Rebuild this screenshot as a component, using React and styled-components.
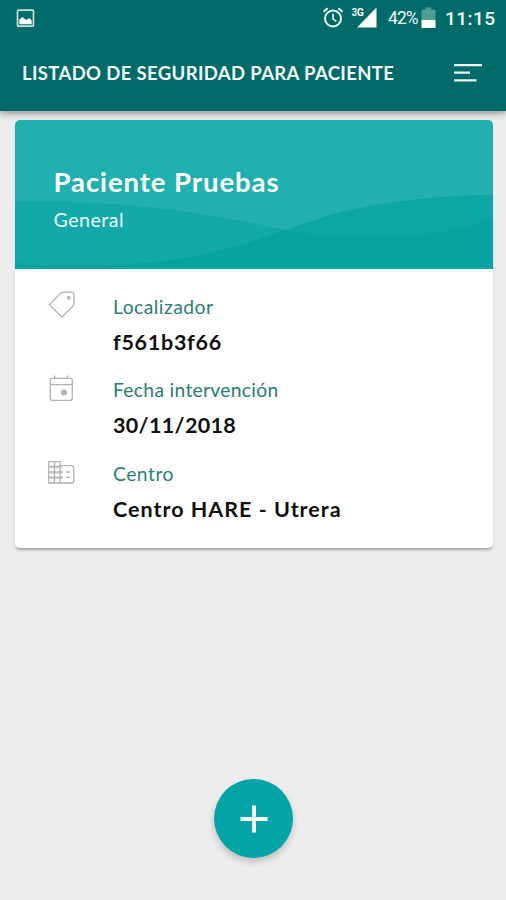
import React from "react";
import styled, { createGlobalStyle } from "styled-components";

const GlobalStyle = createGlobalStyle`
  * { box-sizing: border-box; }
  body { margin: 0; background: #ededed; font-family: Lato, "Open Sans", sans-serif; }
`;

const Screen = styled.div`
  display: flex;
  flex-direction: column;
  width: 506px;
  height: 900px;
  overflow: hidden;
  background: #ededed;
`;

const Header = styled.header`
  flex: none;
  height: 111px;
  background: #006b68;
  box-shadow: 0 2px 7px rgba(0, 0, 0, 0.42);
`;

const StatusBar = styled.div`
  display: flex;
  align-items: center;
  height: 36px;
  padding: 0 11px 0 16px;
  color: #f2f8f8;
  font-family: Roboto, sans-serif;
`;

const StatusIcon = styled.svg`
  display: block;
  flex: none;
  margin-left: ${(p) => p.$gap || 0}px;
`;

const Spacer = styled.div`
  flex: 1;
`;

const Battery = styled.span`
  width: 31px;
  margin-left: 10px;
  font-size: 17.5px;
  line-height: 36px;
  letter-spacing: -0.9px;
  white-space: nowrap;
`;

const Clock = styled.span`
  width: 50px;
  margin-left: 9px;
  font-size: 19.2px;
  font-weight: 500;
  line-height: 37px;
  letter-spacing: 0.35px;
  white-space: nowrap;
`;

const AppBar = styled.div`
  display: flex;
  align-items: center;
  justify-content: space-between;
  height: 73px;
  padding: 0 24px 0 22px;
`;

const AppTitle = styled.h1`
  margin: 0;
  color: #f4fafa;
  font-size: 18.5px;
  font-weight: 700;
  line-height: 24px;
  letter-spacing: ${(p) => p.$spacing}px;
  white-space: nowrap;
`;

const IconButton = styled.button`
  display: block;
  padding: 0;
  border: 0;
  background: none;
`;

const Main = styled.main`
  display: flex;
  flex: 1;
  flex-direction: column;
  align-items: center;
  justify-content: space-between;
  padding: 9px 13.5px 42px 14.5px;
`;

const Card = styled.article`
  width: 478px;
  height: 428px;
  overflow: hidden;
  border-radius: 5px;
  background: #fff;
  box-shadow: 0 3px 3px -1px rgba(0, 0, 0, 0.32);
`;

const CardHead = styled.div`
  display: grid;
  height: 149px;
  background: #21b0b0;
`;

const Waves = styled.svg`
  display: block;
  grid-area: 1 / 1;
`;

const HeadText = styled.div`
  grid-area: 1 / 1;
  z-index: 1;
  padding: 43px 39px 0;
  color: #fff;
`;

const PatientName = styled.h2`
  margin: 0;
  font-size: 27.5px;
  font-weight: 700;
  line-height: 38px;
  letter-spacing: ${(p) => p.$spacing}px;
  white-space: nowrap;
`;

const Category = styled.p`
  margin: 6px 0 0;
  color: #e9fafa;
  font-size: 19.5px;
  line-height: 26px;
  letter-spacing: ${(p) => p.$spacing}px;
`;

const Details = styled.dl`
  margin: 0;
  padding: 21px 0 0 32.5px;
`;

const Row = styled.div`
  display: grid;
  grid-template-columns: 66px 1fr;
  height: 83.4px;
`;

const RowIcon = styled.svg`
  display: block;
  fill: none;
  stroke: #b3b3b3;
  stroke-width: 1.3;
`;

const Label = styled.dt`
  margin-top: 4px;
  color: #2a7d75;
  font-size: 19.3px;
  line-height: 26px;
  letter-spacing: ${(p) => p.$spacing}px;
`;

const Value = styled.dd`
  margin: 7px 0 0;
  color: #111;
  font-size: 21.5px;
  font-weight: 700;
  line-height: 30px;
  letter-spacing: ${(p) => p.$spacing}px;
`;

const AddButton = styled.button`
  display: flex;
  align-items: center;
  justify-content: center;
  width: 79px;
  height: 79px;
  padding: 0;
  border: 0;
  border-radius: 50%;
  background: #02a4a5;
  box-shadow: 0 4px 7px rgba(0, 0, 0, 0.2);
`;

const TagIcon = () => (
  <RowIcon width="30" height="30" viewBox="0 0 30 30">
    <path d="M2.3 14.8 13.5 3.4Q15 2.1 17 2.1H24.5Q27 2.1 27 4.6V12.8Q27 15 25.5 16.5L15 27Z" />
    <circle cx="21.8" cy="7.7" r="1.2" fill="#b3b3b3" />
  </RowIcon>
);

const CalendarIcon = () => (
  <RowIcon width="30" height="30" viewBox="0 0 30 30">
    <rect x="3.3" y="5.3" width="22" height="22" rx="2" />
    <path d="M3.3 11.6H25.3M7.6 2.6V5.3M20.5 2.6V5.3" />
    <circle cx="17" cy="19.4" r="3" fill="#b3b3b3" stroke="none" />
  </RowIcon>
);

const BuildingIcon = () => (
  <RowIcon width="30" height="30" viewBox="0 0 30 30">
    <path d="M1.8 4.6H13.2V8.7H24.5Q26.7 8.7 26.7 11V23.5Q26.7 26 24.5 26H1.8Z" />
    <path d="M1.8 9.5H13.2M1.8 15H16M1.8 20.4H16M7.5 4.6V26M13.2 8.7V26M19 15H23.5M19 20.4H23.5" />
    <path d="M3 10.7H15M3 16.2H15M3 21.6H15" strokeWidth="0.7" />
  </RowIcon>
);

const rows = [
  { label: "Localizador", value: "f561b3f66", Icon: TagIcon, labelSpacing: 0.48, valueSpacing: 0.72 },
  { label: "Fecha intervención", value: "30/11/2018", Icon: CalendarIcon, labelSpacing: 0.3, valueSpacing: 0.33 },
  { label: "Centro", value: "Centro HARE - Utrera", Icon: BuildingIcon, labelSpacing: 0.5, valueSpacing: 1 },
];

export default function App() {
  return (
    <Screen>
      <GlobalStyle />
      <Header>
        <StatusBar>
          <StatusIcon width="19" height="19" viewBox="0 0 19 19">
            <rect x="1.5" y="1.2" width="16" height="16" rx="1" fill="none" stroke="#c9e0df" strokeWidth="1.7" />
            <path d="M3.3 15.2V10.5L6.5 8 10 11 13.5 9 15.7 11.5V15.2Z" fill="#fff" />
          </StatusIcon>
          <Spacer />
          <StatusIcon width="22" height="22" viewBox="0 0 22 22" fill="none" stroke="#eef7f7" strokeWidth="2">
            <circle cx="11" cy="11.5" r="8" />
            <path d="M1.5 4.7 5.7 1.3M20.5 4.7 16.3 1.3" />
            <path d="M11 6.8V11.8L14.3 14.3" strokeWidth="1.6" />
          </StatusIcon>
          <StatusIcon $gap={7} width="27" height="22" viewBox="0 0 27 22">
            <path d="M25.5 .5V20.5H6Z" fill="#fff" />
            <text x="0.5" y="9" fontFamily="Roboto, sans-serif" fontSize="10.5" fontWeight="700" fill="#fff" stroke="#006b68" strokeWidth="2" paintOrder="stroke" textLength="12.5">3G</text>
          </StatusIcon>
          <Battery>42%</Battery>
          <StatusIcon $gap={2} width="15" height="22" viewBox="0 0 15 22">
            <path d="M4.5 .5H10.5V2.5H13Q14.5 2.5 14.5 4V13H.5V4Q.5 2.5 2 2.5H4.5Z" fill="#4d9c98" />
            <path d="M.5 13H14.5V21H.5Z" fill="#fff" />
          </StatusIcon>
          <Clock>11:15</Clock>
        </StatusBar>
        <AppBar>
          <AppTitle $spacing={0.36}>LISTADO DE SEGURIDAD PARA PACIENTE</AppTitle>
          <IconButton aria-label="Menú">
            <svg width="29" height="20" viewBox="0 0 29 20" fill="none" stroke="#eef7f7" strokeWidth="2.2" display="block">
              <path d="M1 2.1H29M1 9.7H17M1 17.4H23.5" />
            </svg>
          </IconButton>
        </AppBar>
      </Header>
      <Main>
        <Card>
          <CardHead>
            <Waves width="478" height="149" viewBox="0 0 478 149" fill="#00a0a0">
              <path fillOpacity="0.4" d="M0 82C90 79 165 89 238 103C266 109 295 117 362 117.5C410 117 450 109 478 100V149H0Z" />
              <path fillOpacity="0.62" d="M0 143C35 147 105 148 170 138C225 128 260 112 322 93C370 81 428 75 478 75V149H0Z" />
            </Waves>
            <HeadText>
              <PatientName $spacing={0.92}>Paciente Pruebas</PatientName>
              <Category $spacing={0.55}>General</Category>
            </HeadText>
          </CardHead>
          <Details>
            {rows.map(({ label, value, Icon, labelSpacing, valueSpacing }) => (
              <Row key={label}>
                <Icon />
                <div>
                  <Label $spacing={labelSpacing}>{label}</Label>
                  <Value $spacing={valueSpacing}>{value}</Value>
                </div>
              </Row>
            ))}
          </Details>
        </Card>
        <AddButton aria-label="Añadir">
          <svg width="28" height="28" viewBox="0 0 28 28" stroke="#fff" strokeWidth="3.8">
            <path d="M14 .5V27.5M.5 14H27.5" />
          </svg>
        </AddButton>
      </Main>
    </Screen>
  );
}
